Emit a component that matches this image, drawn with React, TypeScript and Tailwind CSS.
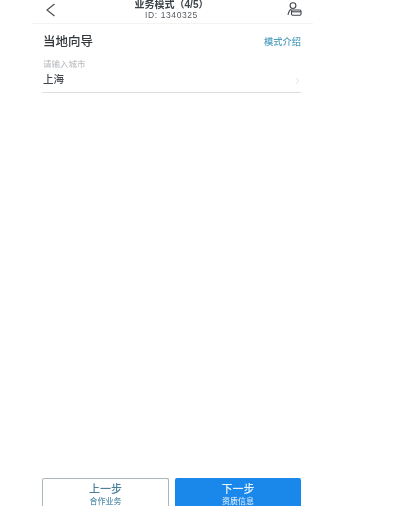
const font = "[font-family:'Liberation_Sans','Noto_Sans_CJK_SC',sans-serif]"

export default function App() {
  return (
    <div className={`${font} w-[400px] h-[506px] bg-white flex flex-col overflow-hidden blur-[0.35px]`}>
      {/* 顶部 */}
      <div className="ml-[32px] w-[281px] h-[24px] shrink-0 border-b border-[#f3f3f3] flex items-start justify-between">
        <svg className="ml-[13px] mt-[3px]" width="11" height="14" viewBox="0 0 11 14" fill="none" stroke="#4a4f55" strokeWidth="1.2">
          <path d="M9.5 1 L2 7 L9.5 13" />
        </svg>
        <div className="flex flex-col items-center">
          <div className="text-[10px] leading-[10px] font-semibold text-[#3d4248]">业务模式（4/5）</div>
          <div className="text-[8.5px] leading-[11px] tracking-[0.6px] text-[#555b61]">ID: 1340325</div>
        </div>
        <svg className="mr-[11px] mt-[2px]" width="15" height="14" viewBox="0 0 15 14" fill="none" stroke="#3f444a" strokeWidth="1.1">
          <circle cx="6" cy="3.6" r="2.9" />
          <path d="M1 13 C1.5 10 2.5 8 4.5 7" />
          <rect x="4.5" y="8" width="9.5" height="5.2" rx="1.2" />
          <path d="M4.5 9.8 H14" />
        </svg>
      </div>

      {/* 내용 */}
      <div className="ml-[42px] w-[259px] flex-1">
        <div className="mt-[10px] pl-[1px] flex items-center justify-between">
          <div className="text-[12.5px] leading-[16px] font-medium text-[#33383d]">当地向导</div>
          <div className="text-[9.25px] leading-[14px] font-medium text-[#4f9fbd]">模式介绍</div>
        </div>
        <div className="mt-[9px] pl-[1px] text-[8.5px] leading-[10px] text-[#b4b8bc]">请输入城市</div>
        <div className="mt-[3px] h-[21px] pl-[1px] border-b border-[#dcdee0] flex items-start justify-between">
          <div className="text-[10.5px] leading-[15px] font-medium text-[#42474c]">上海</div>
          <svg className="mt-[5px] mr-[1px]" width="5" height="8" viewBox="0 0 5 8" fill="none" stroke="#dfe1e3" strokeWidth="0.9">
            <path d="M1 1 L4 4 L1 7" />
          </svg>
        </div>
      </div>

      {/* 하단 버튼 */}
      <div className="ml-[42px] w-[259px] h-[28px] shrink-0 flex gap-[6px] items-start">
        <div className="w-[127px] h-[32px] shrink-0 rounded-[2px] border border-[#a9b7bf] border-b-0 flex flex-col items-center pt-[3px]">
          <div className="text-[11px] leading-[14px] font-medium text-[#4d7f9b]">上一步</div>
          <div className="mt-[1px] text-[8px] leading-[10px] font-medium text-[#5a92ae]">合作业务</div>
        </div>
        <div className="w-[126px] h-[32px] shrink-0 rounded-[2px] bg-[#1a87ea] flex flex-col items-center pt-[4px]">
          <div className="text-[11px] leading-[14px] font-medium text-[#e6f2fc]">下一步</div>
          <div className="mt-[1px] text-[8px] leading-[10px] font-medium text-[#cfe5f8]">资质信息</div>
        </div>
      </div>
    </div>
  )
}
